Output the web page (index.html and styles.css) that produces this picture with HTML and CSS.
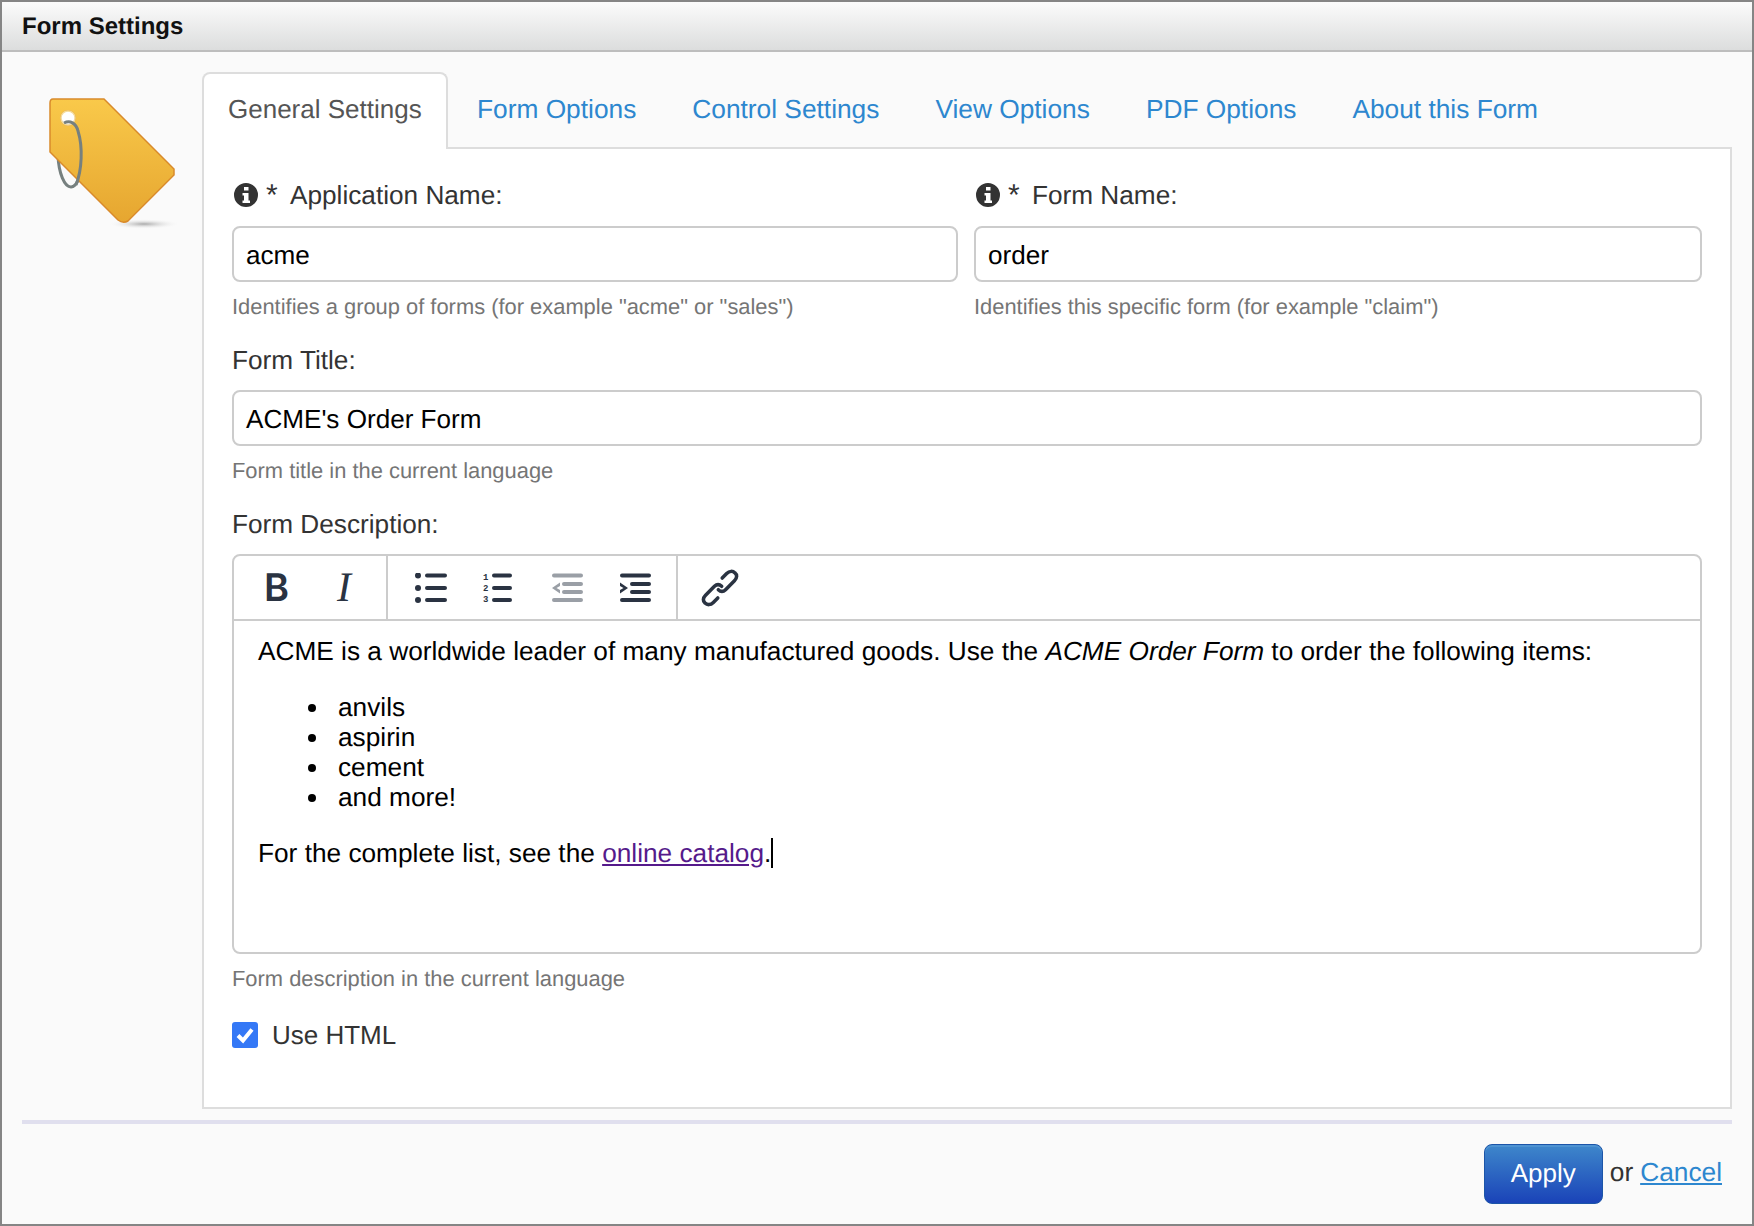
FILE: index.html
```html
<!DOCTYPE html>
<html lang="en">
<head>
  <meta charset="UTF-8" />
  <title>Form Settings</title>
  <link rel="stylesheet" href="styles.css">
</head>
<body>
  <div class="window">
    <div class="title-bar">Form Settings</div>

    <div class="main">
      <div class="side">
        <svg class="tag" width="134" height="136" viewBox="0 0 134 136">
          <defs>
            <linearGradient id="tagFill" x1="0" y1="0" x2="0" y2="1">
              <stop offset="0" stop-color="#f9c94a" />
              <stop offset="1" stop-color="#e6a630" />
            </linearGradient>
            <radialGradient id="tagShadow">
              <stop offset="0" stop-color="#aaa" />
              <stop offset="1" stop-color="#fafafa" stop-opacity="0" />
            </radialGradient>
          </defs>
          <ellipse cx="98" cy="129" rx="36" ry="5" fill="url(#tagShadow)" />
          <ellipse cx="24" cy="60" rx="12" ry="32" fill="none" stroke="#76807f" stroke-width="3" transform="rotate(-2 24 60)" />
          <path d="M7 4 H58 L128 74 V80 L82 126 Q77 129 72 125 L4 57 V8 Q4 4 7 4 Z M22 23 m-7 0 a7 7 0 1 0 14 0 a7 7 0 1 0 -14 0 Z" fill="url(#tagFill)" fill-rule="evenodd" stroke="#d98a2b" stroke-width="1.500" />
          <circle cx="22" cy="23" r="7" fill="#fff" stroke="#f5dc9a" stroke-width="1.500" />
          <path d="M18 28 C24 25 30 28 32 36 C37 52 36 75 30 90" fill="none" stroke="#76807f" stroke-width="3" />
        </svg>
      </div>

      <div class="content">
        <div class="tabs">
          <a class="tab active">General Settings</a>
          <a class="tab">Form Options</a>
          <a class="tab">Control Settings</a>
          <a class="tab">View Options</a>
          <a class="tab">PDF Options</a>
          <a class="tab">About this Form</a>
        </div>

        <div class="panel">
          <div class="row">
            <div class="field">
              <label class="label">
                <svg class="info" width="24" height="24" viewBox="0 0 24 24"><path fill-rule="evenodd" d="M12 0a12 12 0 1 0 0 24a12 12 0 0 0 0-24z M10 4h4.500v3.500h-4.500z M8.500 10h6v7.500h1.500v2.500h-7.500v-2.500h1.500v-5h-1.500z" fill="#333" /></svg>
                <span class="req">*</span> Application Name:
              </label>
              <div class="input">acme</div>
              <p class="help">Identifies a group of forms (for example "acme" or "sales")</p>
            </div>
            <div class="field">
              <label class="label">
                <svg class="info" width="24" height="24" viewBox="0 0 24 24"><path fill-rule="evenodd" d="M12 0a12 12 0 1 0 0 24a12 12 0 0 0 0-24z M10 4h4.500v3.500h-4.500z M8.500 10h6v7.500h1.500v2.500h-7.500v-2.500h1.500v-5h-1.500z" fill="#333" /></svg>
                <span class="req">*</span> Form Name:
              </label>
              <div class="input">order</div>
              <p class="help">Identifies this specific form (for example "claim")</p>
            </div>
          </div>

          <div class="field">
            <label class="label">Form Title:</label>
            <div class="input">ACME's Order Form</div>
            <p class="help">Form title in the current language</p>
          </div>

          <div class="field">
            <label class="label">Form Description:</label>
            <div class="editor">
              <div class="toolbar">
                <div class="tool-group group-text">
                  <span class="tool-b">B</span>
                  <span class="tool-i">I</span>
                </div>
                <div class="tool-group group-list">
                  <svg width="32" height="30" viewBox="0 0 32 30" class="ico">
                    <circle cx="3" cy="2.500" r="3" /><circle cx="3" cy="15" r="3" /><circle cx="3" cy="27" r="3" />
                    <path class="bar" d="M12 2.500H30M12 15H30M12 27H30" />
                  </svg>
                  <svg width="32" height="36" viewBox="0 -3 32 36" class="ico">
                    <text x="0" y="7" class="num">1</text><text x="0" y="18" class="num">2</text><text x="0" y="29" class="num">3</text>
                    <path class="bar" d="M11 2.500H27M11 15H27M11 27H27" />
                  </svg>
                  <svg width="32" height="30" viewBox="0 0 32 30" class="ico dim">
                    <path class="bar" d="M3 2.500H30M13 11H30M13 19H30M3 27H30" />
                    <path d="M9 9.500L1 15L9 20.500V17L5.500 15L9 13Z" />
                  </svg>
                  <svg width="32" height="30" viewBox="0 0 32 30" class="ico">
                    <path class="bar" d="M3 2.500H30M13 11H30M13 19H30M3 27H30" />
                    <path d="M1 9.500L9 15L1 20.500V17L4.500 15L1 13Z" />
                  </svg>
                </div>
                <div class="tool-group group-link">
                  <svg width="40" height="40" viewBox="0 0 36 36" class="link-ico">
                    <path d="M16.500 19.500C18.500 21.500 21 21.500 23 19.500L31 11.500C33.500 9 33.500 6 31.500 4.500C29.500 2.500 26.500 2.500 24 5L20 9" />
                    <path d="M19.500 16.500C17.500 14.500 15 14.500 13 16.500L5 24.500C2.500 27 2.500 30 4.500 31.500C6.500 33.500 9.500 33.500 12 31L16 27" />
                  </svg>
                </div>
              </div>
              <div class="editor-body">
                <p>ACME is a worldwide leader of many manufactured goods. Use the <em>ACME Order Form</em> to order the following items:</p>
                <ul>
                  <li>anvils</li>
                  <li>aspirin</li>
                  <li>cement</li>
                  <li>and more!</li>
                </ul>
                <p>For the complete list, see the <a class="visited">online catalog</a>.<span class="caret"></span></p>
              </div>
            </div>
            <p class="help">Form description in the current language</p>
          </div>

          <div class="check-row">
            <span class="check">
              <svg width="26" height="26" viewBox="0 0 26 26"><path d="M6 13.500L11 18.500L20 7.500" fill="none" stroke="#fff" stroke-width="4" /></svg>
            </span>
            <span>Use HTML</span>
          </div>
        </div>
      </div>
    </div>

    <div class="footer">
      <button class="apply">Apply</button>
      <span class="or">or</span>
      <a class="cancel">Cancel</a>
    </div>
  </div>
</body>
</html>
```

FILE: styles.css
```css
html, body {
  margin: 0;
  padding: 0;
}
body {
  font-family: "Liberation Sans", Arial, sans-serif;
  color: #333;
  background: #fafafa;
  text-rendering: geometricPrecision;
}
.window {
  box-sizing: border-box;
  width: 1754px;
  height: 1226px;
  border: 2px solid #858585;
  display: flex;
  flex-direction: column;
  background: #fafafa;
}
.title-bar {
  box-sizing: border-box;
  height: 50px;
  padding: 0 20px;
  line-height: 50px;
  font-size: 24px;
  font-weight: bold;
  color: #111;
  background: linear-gradient(#fbfbfb, #dcdddd);
  border-bottom: 2px solid #bdbdbd;
}
.main {
  display: flex;
  padding-top: 20px;
}
.side {
  width: 200px;
  flex: none;
}
.tag {
  display: block;
  margin: 23px 0 0 44px;
}
.content {
  width: 1530px;
  flex: none;
}
.tabs {
  display: flex;
  height: 75px;
  font-size: 26.3px;
  line-height: 74px;
  white-space: nowrap;
}
.tab {
  padding: 0 28px 0 28px;
  color: #2d87cf;
}
.tab.active {
  box-sizing: border-box;
  height: 77px;
  width: 246px;
  margin-right: 1px;
  padding: 0 24px;
  font-size: 26px;
  color: #555;
  background: #fff;
  border: 2px solid #ddd;
  border-bottom: none;
  border-radius: 8px 8px 0 0;
  position: relative;
  z-index: 1;
  line-height: 70px;
}
.panel {
  box-sizing: border-box;
  height: 962px;
  padding: 31px 28px 0 28px;
  background: #fff;
  border: 2px solid #ddd;
  font-size: 26.2px;
}
.row {
  display: grid;
  grid-template-columns: 726px 1fr;
  gap: 16px;
}
.field {
  margin-bottom: 24px;
}
.label {
  display: flex;
  align-items: center;
  gap: 8px;
  height: 30px;
  line-height: 30px;
  color: #333;
  margin-bottom: 15px;
}
.row .label {
  margin-bottom: 16px;
}
.info {
  flex: none;
  margin-left: 2px;
}
.req {
  width: 16px;
  font-size: 30px;
  position: relative;
  top: 1px;
}
.input {
  box-sizing: border-box;
  height: 56px;
  line-height: 54px;
  padding: 0 12px;
  font-size: 26.1px;
  color: #000;
  background: #fff;
  border: 2px solid #ccc;
  border-radius: 8px;
}
.help {
  margin: 11px 0 0 0;
  font-size: 21.9px;
  line-height: 28px;
  color: #757575;
}
.editor {
  box-sizing: border-box;
  height: 400px;
  border: 2px solid #ccc;
  border-radius: 8px;
  color: #000;
}
.toolbar {
  display: flex;
  height: 63px;
  border-bottom: 2px solid #ccc;
  color: #2a3342;
}
.tool-group {
  display: flex;
  align-items: center;
  box-sizing: border-box;
  height: 63px;
  border-right: 2px solid #ccc;
}
.group-text {
  width: 154px;
  padding-left: 30px;
  gap: 48px;
}
.tool-b {
  font-family: Inter, "Liberation Sans", sans-serif;
  font-weight: 600;
  font-size: 38px;
}
.tool-i {
  font-family: "Liberation Serif", serif;
  font-style: italic;
  font-size: 42px;
}
.group-list {
  width: 290px;
  padding-left: 27px;
  gap: 36px;
}
.group-link {
  border-right: none;
  padding-left: 22px;
}
.ico {
  fill: #2a3342;
  flex: none;
}
.ico .bar {
  fill: none;
  stroke: #2a3342;
  stroke-width: 4;
  stroke-linecap: round;
}
.ico.dim {
  fill: #9a9fa6;
}
.ico.dim .bar {
  stroke: #9a9fa6;
}
.num {
  font-family: "Liberation Mono", monospace;
  font-weight: bold;
  font-size: 9px;
}
.link-ico {
  fill: none;
  stroke: #2a3342;
  stroke-width: 3.200;
  stroke-linecap: round;
}
.editor-body {
  padding: 15px 24px;
  line-height: 30px;
  font-size: 26.24px;
}
.editor-body p {
  margin: 0;
}
.editor-body ul {
  margin: 26px 0 26px 0;
  padding: 0 0 0 80px;
  list-style: none;
}
.editor-body li::before {
  content: "";
  display: inline-block;
  width: 8px;
  height: 8px;
  border-radius: 50%;
  background: #000;
  margin-left: -30px;
  margin-right: 22px;
  vertical-align: 4px;
}
.visited {
  color: #551a8b;
  text-decoration: underline;
}
.caret {
  display: inline-block;
  width: 2px;
  height: 30px;
  background: #000;
  vertical-align: top;
}
.check-row {
  display: flex;
  align-items: center;
  gap: 14px;
  margin-top: 27px;
  font-size: 26px;
  line-height: 30px;
}
.check {
  width: 26px;
  height: 26px;
  border-radius: 3px;
  background: #3478f6;
}
.check svg {
  display: block;
}
.footer {
  display: flex;
  align-items: center;
  justify-content: flex-end;
  margin: 11px 20px 0 20px;
  padding: 20px 10px 0 0;
  border-top: 4px solid #e0dfee;
  font-size: 26.3px;
  line-height: 56px;
}
.apply {
  box-sizing: border-box;
  width: 119px;
  height: 60px;
  padding: 0 0 2px 0;
  font-family: inherit;
  font-size: 26px;
  color: #fff;
  border: 1px solid #1c55a8;
  border-radius: 8px;
  background: linear-gradient(#3e87cb, #1a43b8);
  box-shadow: inset 0 2px 0 #4d92d2;
  text-rendering: geometricPrecision;
}
.or {
  margin: 0 7px 4px 7px;
}
.cancel {
  color: #2d87cf;
  text-decoration: underline;
  margin-bottom: 4px;
}
```
